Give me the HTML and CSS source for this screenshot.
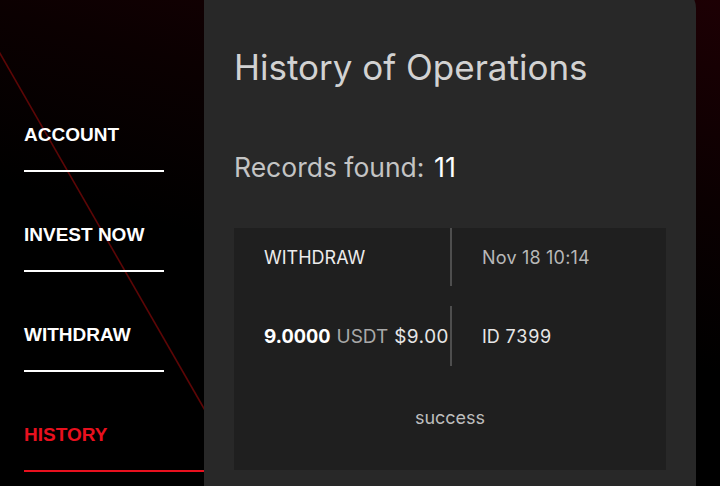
FILE: index.html
```html
<!DOCTYPE html>
<html>
<head>
<meta charset="utf-8">
<link rel="stylesheet" href="styles.css">
</head>
<body>
<div class="page">
  <svg class="streak" width="210" height="486" viewBox="0 0 210 486"><line x1="-2" y1="50" x2="206" y2="412" stroke="#5c0606" stroke-width="1.6"/></svg>
  <nav class="sidebar">
    <a class="nav-item" href="#">ACCOUNT</a>
    <a class="nav-item" href="#">INVEST NOW</a>
    <a class="nav-item" href="#">WITHDRAW</a>
    <a class="nav-item active" href="#">HISTORY</a>
  </nav>
  <main class="panel">
    <h1 class="title">History of Operations</h1>
    <p class="records">Records found: <span class="count">11</span></p>
    <div class="card">
      <div class="row">
        <div class="cell cell-left type">WITHDRAW</div>
        <div class="cell cell-right date">Nov 18 10:14</div>
      </div>
      <div class="row row-amount">
        <div class="cell cell-left amount"><b>9.0000</b> <span class="unit">USDT</span> <span class="usd">$9.00</span></div>
        <div class="cell cell-right opid">ID 7399</div>
      </div>
      <div class="status">success</div>
    </div>
  </main>
</div>
</body>
</html>
```

FILE: styles.css
```css
html, body {
  margin: 0;
  padding: 0;
  height: 100%;
  background: #000;
  overflow: hidden;
}
.page {
  position: relative;
  display: flex;
  height: 486px;
  width: 720px;
  background: linear-gradient(195deg, #1d0004 0%, #0b0001 30%, #000 55%);
  font-family: Inter, "Noto Sans", sans-serif;
}
.streak {
  position: absolute;
  left: 0;
  top: 0;
}
.sidebar {
  position: relative;
  width: 204px;
  flex: none;
  padding-top: 124px;
  padding-left: 24px;
  box-sizing: border-box;
  display: flex;
  flex-direction: column;
  font-family: "Liberation Sans", Arial, sans-serif;
}
.nav-item {
  display: block;
  width: 140px;
  padding-top: 52px;
  padding-bottom: 24px;
  line-height: 22px;
  font-size: 19px;
  font-weight: bold;
  color: #fff;
  text-decoration: none;
  border-bottom: 2px solid #fff;
}
.nav-item:first-child {
  padding-top: 0;
}
.nav-item.active {
  color: #e8101e;
  border-bottom-color: #e8101e;
  width: 180px;
}
.panel {
  position: relative;
  width: 492px;
  flex: none;
  margin-top: -12px;
  height: 520px;
  background: #282828;
  border-radius: 0 20px 0 0;
  padding: 59px 30px 0 30px;
  box-sizing: border-box;
}
.title {
  margin: 0;
  font-size: 35px;
  line-height: 40px;
  font-weight: 400;
  color: #d2d2d2;
  letter-spacing: 0;
}
.records {
  margin: 64px 0 0 0;
  font-size: 26.5px;
  line-height: 32px;
  color: #c4c4c4;
}
.count {
  color: #fff;
  font-size: 27px;
  margin-left: 2px;
}
.card {
  margin-top: 44px;
  background: #1f1f1f;
  height: 242px;
  display: flex;
  flex-direction: column;
}
.row {
  display: flex;
  height: 58px;
}
.row-amount {
  margin-top: 20px;
  height: 60px;
}
.cell {
  display: flex;
  align-items: center;
  font-size: 18px;
  box-sizing: border-box;
}
.cell-left {
  width: 218px;
  padding-left: 30px;
  border-right: 2px solid #4e4e4e;
}
.cell-right {
  padding-left: 30px;
}
.type {
  color: #ececec;
}
.date {
  color: #b8b8b8;
  letter-spacing: 0.2px;
}
.amount {
  color: #e6e6e6;
  white-space: nowrap;
  font-size: 19px;
  font-variant-numeric: tabular-nums;
}
.amount b {
  color: #fff;
  font-weight: 700;
  margin-right: 6px;
}
.unit {
  color: #a8a8a8;
  margin-right: 6px;
}
.opid {
  color: #e6e6e6;
  font-variant-numeric: tabular-nums;
}
.status {
  flex: 1;
  display: flex;
  align-items: center;
  justify-content: center;
  font-size: 18px;
  color: #bdbdbd;
  padding-bottom: 2px;
}
```
